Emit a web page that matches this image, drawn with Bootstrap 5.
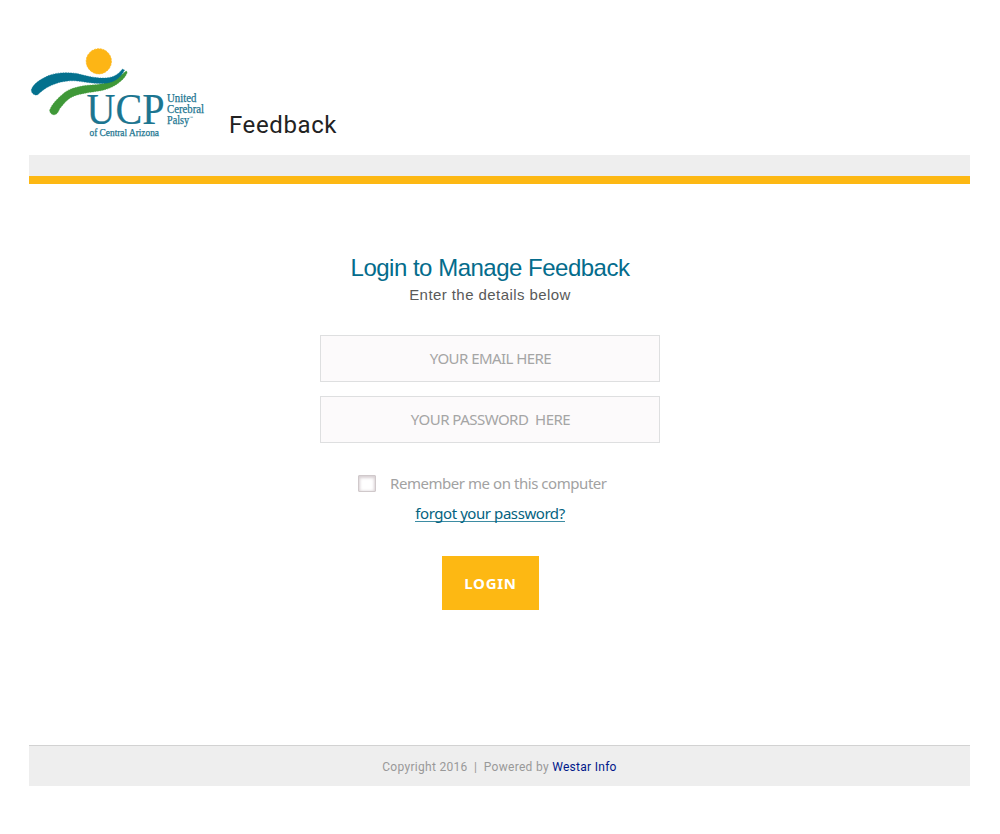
<!DOCTYPE html>
<html lang="en">
<head>
<meta charset="utf-8">
<meta name="viewport" content="width=device-width, initial-scale=1">
<title>Feedback</title>
<link href="https://cdn.jsdelivr.net/npm/bootstrap@5.3.0/dist/css/bootstrap.min.css" rel="stylesheet">
<style>
body{background:#fff;font-family:"Noto Sans",sans-serif;font-size:14px}
.page{width:941px;margin-left:29px}
.site-head{height:155px}
.logo{width:180px;height:95px;margin-top:45px;display:block}
.app-name{font:400 24px/28px Roboto,sans-serif;letter-spacing:.6px;color:#222;margin:111px 0 0 20px}
.strip{height:29px;background:#eee;border-bottom:8px solid #fdb813}
.login-area{height:561px;padding:70px 19px 0 0}
.login-form{width:340px}
.login-title{font:400 24px/28px "Liberation Sans",Arial,sans-serif;color:#046c8c;letter-spacing:-.5px;white-space:nowrap}
.login-sub{font:400 15px/18px "Liberation Sans",Arial,sans-serif;color:#595959;letter-spacing:.43px;margin:4px 0 31px}
.field{height:47px;border:1px solid #dedfe0;background:#fcfafb;font-size:15px;padding:0 0 2px 1px}
.field:focus{background:#fcfafb}
.field::placeholder{color:#a5a5a5;opacity:1}
.field-email{letter-spacing:-.55px}
.field-pass{letter-spacing:-.52px;margin-top:14px}
.remember{margin:31px 0 0 38px;height:18px;color:#a2a2a2;font-size:15px;line-height:18px;white-space:nowrap}
.remember .form-check-input{width:18px;height:17px;margin:0;border:1px solid #d0c9cb;border-radius:1px;box-shadow:inset 0 1px 3px 1px #d8d0d3}
.remember label{margin-left:14px;letter-spacing:-.45px}
.forgot{color:#04637f;font-size:15px;line-height:18px;margin-top:12px;letter-spacing:-.43px;text-decoration:none;border-bottom:1px solid #3d8ca3;height:18px}
.btn-login{width:97px;height:54px;margin:34px 0 0 1px;background:#fdb813;color:#fff;font-size:15px;font-weight:700;letter-spacing:.7px;padding:0}
.site-foot{height:41px;background:#eee;border-top:1px solid #d2d2d2;font:400 12px/14px Roboto,sans-serif;letter-spacing:.29px;color:#999;padding-top:1px}
.site-foot a{color:#00188a}
</style>
</head>
<body>
<div class="page">
  <header class="site-head d-flex align-items-start">
    <svg class="logo" viewBox="29 45 180 95" role="img" aria-label="UCP United Cerebral Palsy of Central Arizona">
      <circle cx="98.8" cy="61.3" r="12.6" fill="#fdb515" stroke="#fdb515" stroke-width=".8" stroke-dasharray="2 1"/>
      <path fill="#3f9838" stroke="#3f9838" stroke-width=".5" stroke-dasharray="1.500 1" d="M49.500 110.500C52 104 57 99 64 93C69 88.500 81 85.500 92 85C108 84 119 78 126 71L127.300 72C126 77 120 83 112 87C102 92 93 91 79 94.500C69 97 66 101 59.500 109C57.500 115.500 53 116 50.500 113Z"/>
      <path fill="#04718e" stroke="#04718e" stroke-width=".5" stroke-dasharray="1.500 1" d="M31.300 90C33 84 40 79.500 48 75.800C57 72 68 72.300 77 73.500C86 76 98 79 108 77.700C116 76.500 119 73 122.500 69L124.500 70C121 77.500 115 81.500 108 83C97 84.500 86 82 75 80.800C64 80.500 56 83 49 86.500C43 89.500 41 92 38 94.500C36 96 31.500 94.500 31.300 90Z"/>
      <g fill="#1c7590" stroke="#1c7590" font-family="Liberation Serif, serif">
        <text x="86.500" y="124" font-size="45" textLength="78" lengthAdjust="spacingAndGlyphs" stroke-width=".2">UCP</text>
        <g font-size="11.500" stroke-width=".25">
          <text x="167" y="102.300" textLength="29.500" lengthAdjust="spacingAndGlyphs">United</text>
          <text x="167" y="112.500" textLength="37" lengthAdjust="spacingAndGlyphs">Cerebral</text>
          <text x="167" y="123.500" textLength="22" lengthAdjust="spacingAndGlyphs">Palsy</text>
          <text x="189" y="119" font-size="4" stroke="none">™</text>
        </g>
        <text x="89.500" y="136.300" font-size="9.800" stroke-width=".25" textLength="69.500" lengthAdjust="spacingAndGlyphs">of Central Arizona</text>
      </g>
    </svg>
    <h1 class="app-name">Feedback</h1>
  </header>
  <div class="strip"></div>
  <main class="login-area d-flex justify-content-center">
    <form class="login-form d-flex flex-column align-items-center">
      <h2 class="login-title mb-0">Login to Manage Feedback</h2>
      <p class="login-sub">Enter the details below</p>
      <input class="form-control rounded-0 text-center field field-email" type="text" placeholder="YOUR EMAIL HERE" aria-label="Email">
      <input class="form-control rounded-0 text-center field field-pass" type="password" placeholder="YOUR PASSWORD&nbsp; HERE" aria-label="Password">
      <div class="remember d-flex align-items-center align-self-start">
        <input class="form-check-input flex-shrink-0" type="checkbox" id="remember">
        <label for="remember">Remember me on this computer</label>
      </div>
      <a class="forgot" href="#">forgot your password?</a>
      <button class="btn btn-login rounded-0 border-0" type="button">LOGIN</button>
    </form>
  </main>
  <footer class="site-foot d-flex justify-content-center align-items-center">
    <div>Copyright 2016 &nbsp;|&nbsp; Powered by <a class="text-decoration-none" href="#">Westar Info</a></div>
  </footer>
</div>
<script src="https://cdn.jsdelivr.net/npm/bootstrap@5.3.0/dist/js/bootstrap.bundle.min.js"></script>
</body>
</html>
